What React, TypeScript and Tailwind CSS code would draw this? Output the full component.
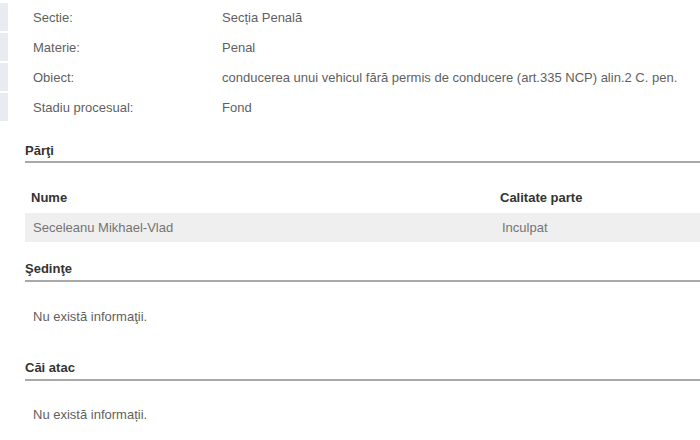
import React from "react";

const details = [
  ["Sectie:", "Secția Penală"],
  ["Materie:", "Penal"],
  ["Obiect:", "conducerea unui vehicul fără permis de conducere (art.335 NCP) alin.2 C. pen."],
  ["Stadiu procesual:", "Fond"],
];

function SectionHeader({ title, className }: { title: string; className: string }) {
  return (
    <div className={`ml-[25px] border-b-2 border-[#a9a9a9] ${className}`}>
      <div className="h-[20px] leading-[20px] text-[13px] font-bold text-[#333] font-['Liberation_Sans',Arial,sans-serif]">
        {title}
      </div>
    </div>
  );
}

export default function App() {
  return (
    <div className="w-[700px] h-[440px] bg-white overflow-hidden text-[13px] text-[#5f5f5f] font-['Liberation_Sans',Arial,sans-serif]">
      <div className="pt-[3px]">
        {details.map(([k, v]) => (
          <div key={k} className="flex h-[30px] items-center">
            <div className="w-[8px] self-stretch mb-[2px] bg-[#e8ebef]" />
            <div className="pl-[25px] w-[214px]">{k}</div>
            <div className="whitespace-nowrap">{v}</div>
          </div>
        ))}
      </div>
      <SectionHeader title="Părţi" className="mt-[18px]" />
      <div className="ml-[25px] mt-[20px]">
        <div className="flex h-[30px] items-center font-bold text-[#333]">
          <div className="pl-[6px] w-[475px]">Nume</div>
          <div>Calitate parte</div>
        </div>
        <div className="flex h-[29px] items-center bg-[#efefef] text-[#747474]">
          <div className="pl-[8px] w-[477px]">Seceleanu Mikhael-Vlad</div>
          <div>Inculpat</div>
        </div>
      </div>
      <SectionHeader title="Şedinţe" className="mt-[17px] pb-[1px]" />
      <div className="ml-[33px] mt-[27px] h-[16px] leading-[16px]">Nu există informaţii.</div>
      <SectionHeader title="Căi atac" className="mt-[33px] pb-[1px]" />
      <div className="ml-[33px] mt-[26px] h-[16px] leading-[16px]">Nu există informații.</div>
    </div>
  );
}
